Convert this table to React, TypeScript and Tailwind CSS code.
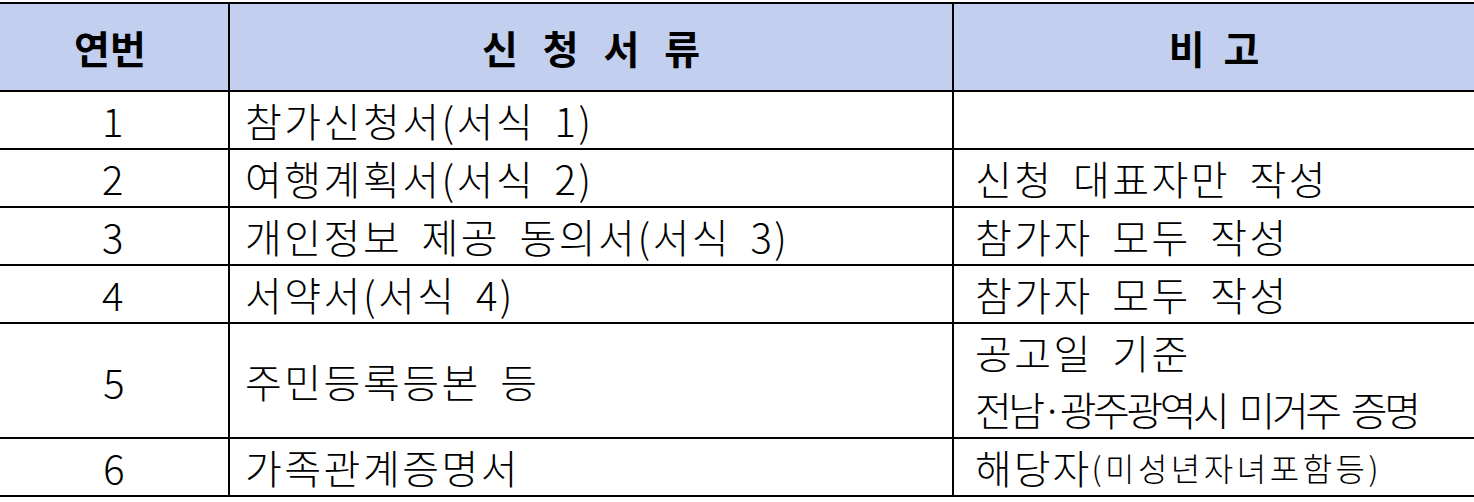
const rows = [
  { no: "1", doc: "참가신청서(서식 1)", note: null },
  { no: "2", doc: "여행계획서(서식 2)", note: "신청 대표자만 작성" },
  { no: "3", doc: "개인정보 제공 동의서(서식 3)", note: "참가자 모두 작성" },
  { no: "4", doc: "서약서(서식 4)", note: "참가자 모두 작성" },
];

export default function App() {
  return (
    <div
      className="w-[1474px] h-[502px] bg-white text-black pt-[2px]"
      style={{ fontFamily: '"Noto Sans CJK KR", "Noto Sans", sans-serif' }}
    >
      <div className="border-t-2 border-black">
        {/* Header */}
        <div className="grid grid-cols-[230px_724px_1fr] h-[88px] bg-[#c2cfee] border-b-2 border-black font-bold text-[39px] leading-none">
          <div className="border-r-2 border-black flex items-center justify-center pr-[8px]">연번</div>
          <div className="border-r-2 border-black flex items-center justify-center [word-spacing:16px]">
            신 청 서 류
          </div>
          <div className="flex items-center justify-center [word-spacing:10px]">비 고</div>
        </div>

        {rows.map((r) => (
          <div
            key={r.no}
            className="grid grid-cols-[230px_724px_1fr] h-[58px] border-b-2 border-black text-[40px] leading-none font-light tracking-[2.5px] [word-spacing:8px]"
          >
            <div className="border-r-2 border-black flex items-center justify-center">{r.no}</div>
            <div className="border-r-2 border-black flex items-center pl-[15px]">{r.doc}</div>
            <div className="flex items-center pl-[21px]">{r.note}</div>
          </div>
        ))}

        {/* Row 5 */}
        <div className="grid grid-cols-[230px_724px_1fr] h-[115px] border-b-2 border-black text-[40px] leading-none font-light">
          <div className="border-r-2 border-black flex items-center justify-center">5</div>
          <div className="border-r-2 border-black flex items-center pl-[15px] tracking-[2.5px] [word-spacing:8px]">
            주민등록등본 등
          </div>
          <div className="flex flex-col justify-center pl-[21px] leading-[57px]">
            <span className="tracking-[2.5px] [word-spacing:8px]">공고일 기준</span>
            <span className="tracking-[-3.5px] [word-spacing:7px]">전남·광주광역시 미거주 증명</span>
          </div>
        </div>

        {/* Row 6 */}
        <div className="grid grid-cols-[230px_724px_1fr] h-[58px] border-b-2 border-black text-[40px] leading-none font-light">
          <div className="border-r-2 border-black flex items-center justify-center">6</div>
          <div className="border-r-2 border-black flex items-center pl-[15px] tracking-[2.5px]">가족관계증명서</div>
          <div className="flex items-center pl-[21px] tracking-[2px]">
            해당자<span className="text-[32px] tracking-[3.5px]">(미성년자녀포함등)</span>
          </div>
        </div>
      </div>
    </div>
  );
}
